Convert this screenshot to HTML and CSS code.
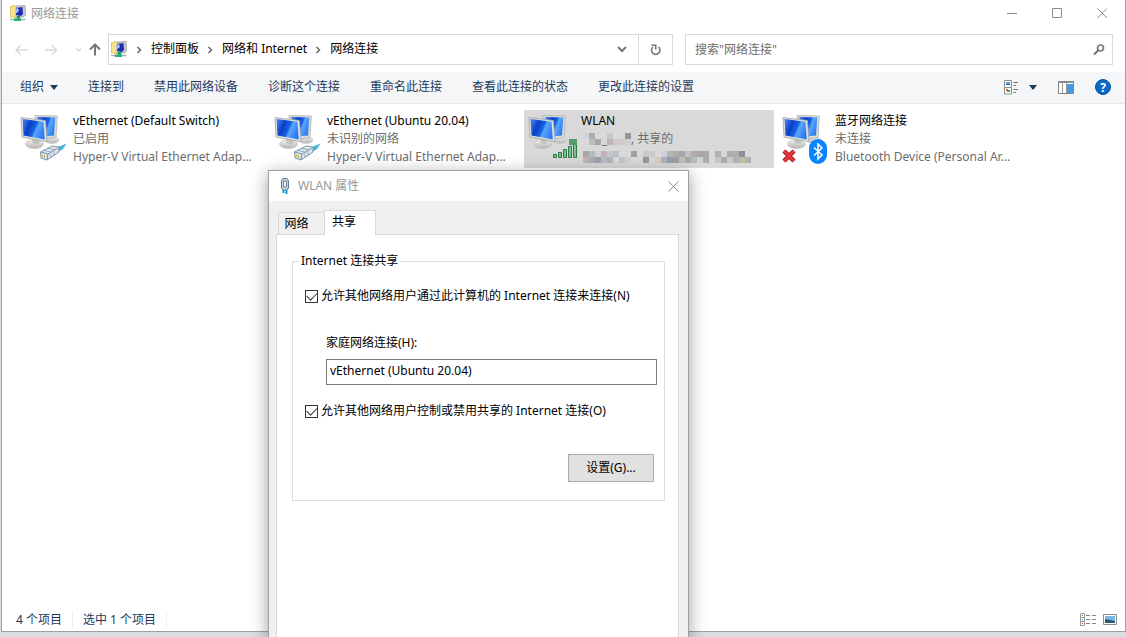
FILE: index.html
```html
<!DOCTYPE html>
<html lang="zh-CN">
<head>
    <meta charset="UTF-8">
    <title>网络连接</title>
    <link rel="stylesheet" href="styles.css">
</head>
<body>
    <!-- shared icons -->
    <svg class="defs" width="0" height="0" aria-hidden="true">
        <defs>
            <linearGradient id="screen" x1="0" y1="0.2" x2="1" y2="0.6">
                <stop offset="0" stop-color="#3f7ff0"/>
                <stop offset="0.3" stop-color="#0b3fc4"/>
                <stop offset="0.55" stop-color="#1462e6"/>
                <stop offset="0.65" stop-color="#5aa6fb"/>
                <stop offset="1" stop-color="#2a7af5"/>
            </linearGradient>
            <linearGradient id="stand" x1="0" y1="0" x2="0" y2="1">
                <stop offset="0" stop-color="#f2f2f0"/>
                <stop offset="1" stop-color="#b4b4b2"/>
            </linearGradient>
            <symbol id="pcs" viewBox="0 0 48 50">
                <ellipse cx="32" cy="28" rx="7" ry="3.5" fill="url(#stand)" stroke="#c8c8c5" stroke-width="0.5"/>
                <path d="M15 3.500 37.300 4 36 25.500 25 27 16 20Z" fill="#dcdcd8" stroke="#b0b0ad" stroke-width="0.8"/>
                <path d="M17 5 35.300 5.500 34 23.500 24 24.500Z" fill="url(#screen)"/>
                <ellipse cx="14.500" cy="32" rx="9" ry="4.500" fill="url(#stand)" stroke="#bdbdba" stroke-width="0.6"/>
                <path d="M12 26 20 28 18.500 32 13 31.500Z" fill="#c2c2be"/>
                <path d="M1 5.500 25.500 8.500 27 29.700 2 25Z" fill="#e2e2de" stroke="#a2a3a0" stroke-width="0.8"/>
                <path d="M2.600 7 23.500 9.800 24.800 27.500 3.500 23.500Z" fill="url(#screen)"/>
            </symbol>
            <symbol id="plug" viewBox="0 0 28 18">
                <path d="M17 5 27.500 0.500 24 6 20 8.500Z" fill="#3db4d8"/>
                <path d="M1.500 9 13 3 20.500 4 19.500 9.500 8 17 2 15Z" fill="#dbe6ee" stroke="#7389a0" stroke-width="0.9"/>
                <path d="M1.500 9 9 11 20 4.500M9 11 8 17" fill="none" stroke="#7389a0" stroke-width="0.9"/>
                <path d="M5 7.500 12 9M9 5.500 16 6.500M12 10.500V14M15 8.500V12" stroke="#8ba0b6" stroke-width="0.8"/>
                <path d="M3.500 11.500V14M5.500 12V15" stroke="#bfb45c" stroke-width="1"/>
            </symbol>
            <symbol id="netfolder" viewBox="0 0 17 17">
                <path d="M0.500 1.500 5 0.500 6.500 2V12.500L0.500 12Z" fill="#f7e488" stroke="#d8be56" stroke-width="0.8"/>
                <path d="M6.500 1 15 0.500 15.500 10 13 12H6Z" fill="#c9cacf" stroke="#9c9ca5" stroke-width="0.8"/>
                <path d="M6 3 12.500 2 13 9 11 11 6 10Z" fill="#1c2cb5"/>
                <path d="M5 4 8 3 9 6 5.500 9Z" fill="#a9bcf0"/>
                <path d="M7 11H10V14H7Z" fill="#179760"/>
                <path d="M0 14.500H15.500" stroke="#a9b2ae" stroke-width="1.500"/>
                <path d="M4 13.500H11V16H4Z" fill="#1bb475"/>
            </symbol>
            <symbol id="chevron" viewBox="0 0 6 8">
                <path d="M1.500 1 4.500 4 1.500 7" fill="none" stroke="#686868" stroke-width="1.500"/>
            </symbol>
        </defs>
    </svg>

    <main class="window">
        <header class="titlebar">
            <svg class="icon-app" width="17" height="17"><use href="#netfolder"/></svg>
            <h1 class="title">网络连接</h1>
            <div class="caption">
                <button class="caption-btn" aria-label="最小化"><svg width="11" height="11"><path d="M0 5.500H10" stroke="#8d8d8d"/></svg></button>
                <button class="caption-btn" aria-label="最大化"><svg width="11" height="11"><path d="M0.500 0.500H9.500V9.500H0.500Z" fill="none" stroke="#8d8d8d"/></svg></button>
                <button class="caption-btn" aria-label="关闭"><svg width="11" height="11"><path d="M0.500 0.500 10 10M10 0.500 0.500 10" stroke="#8d8d8d"/></svg></button>
            </div>
        </header>

        <div class="navbar">
            <div class="nav-buttons">
                <button class="nav-btn" aria-label="后退"><svg width="13" height="12"><path d="M12.500 6H1M6 1 1 6 6 11" fill="none" stroke="#d9d9d9" stroke-width="1.500"/></svg></button>
                <button class="nav-btn" aria-label="前进"><svg width="13" height="12"><path d="M0 6H11.500M6.500 1 11.500 6 6.500 11" fill="none" stroke="#d9d9d9" stroke-width="1.500"/></svg></button>
                <button class="nav-btn nav-small" aria-label="最近"><svg width="7" height="6"><path d="M1 1.500 3.500 4 6 1.500" fill="none" stroke="#d9d9d9" stroke-width="1.500"/></svg></button>
                <button class="nav-btn nav-up" aria-label="向上"><svg width="12" height="13"><path d="M6 12.500V2M1 6.500 6 1.500 11 6.500" fill="none" stroke="#777" stroke-width="2"/></svg></button>
            </div>
            <nav class="address">
                <svg class="icon-path" width="17" height="17"><use href="#netfolder"/></svg>
                <svg class="sep" width="6" height="8"><use href="#chevron"/></svg>
                <a class="crumb" href="#">控制面板</a>
                <svg class="sep" width="6" height="8"><use href="#chevron"/></svg>
                <a class="crumb" href="#">网络和 Internet</a>
                <svg class="sep" width="6" height="8"><use href="#chevron"/></svg>
                <a class="crumb" href="#">网络连接</a>
                <button class="drop" aria-label="历史记录"><svg width="10" height="7"><path d="M1 1 5 5 9 1" fill="none" stroke="#777" stroke-width="2"/></svg></button>
                <button class="refresh" aria-label="刷新"><svg width="12" height="12"><path d="M3 3A4.200 4.200 0 1 0 8.500 3" fill="none" stroke="#777" stroke-width="1.600"/><path d="M1.500 1.200H5.700V5.400" fill="none" stroke="#777" stroke-width="1.600"/></svg></button>
            </nav>
            <div class="search">
                <input class="search-input" type="text" aria-label="搜索" placeholder='搜索"网络连接"'>
                <svg width="12" height="12"><circle cx="7.500" cy="4" r="3" fill="none" stroke="#777" stroke-width="1.700"/><path d="M5.300 6.300 1 10.500" stroke="#777" stroke-width="2"/></svg>
            </div>
        </div>

        <div class="toolbar">
            <button class="tool">组织 <svg class="caret" width="8" height="5"><path d="M0 0H8L4 5Z" fill="#1e395b"/></svg></button>
            <button class="tool">连接到</button>
            <button class="tool">禁用此网络设备</button>
            <button class="tool">诊断这个连接</button>
            <button class="tool">重命名此连接</button>
            <button class="tool">查看此连接的状态</button>
            <button class="tool">更改此连接的设置</button>
            <div class="tool-icons">
                <button class="tool-icon" aria-label="更改视图">
                    <svg width="15" height="15"><path d="M0.500 0.500H7.500V14H0.500ZM0.500 7.500H7.500" fill="#fff" stroke="#8f8f8f"/><path d="M2 2H6V5H2Z" fill="#6aa6dc"/><path d="M2 4H6V5H2Z" fill="#24608f"/><path d="M2 9H4V11H2Z" fill="#d2773c"/><path d="M3 10H6V12H3Z" fill="#4aa347"/><path d="M9.500 2.500H14M9.500 5.500H12M9.500 9.500H14M9.500 12.500H12" stroke="#777"/></svg>
                    <svg width="8" height="5"><path d="M0 0H8L4 5Z" fill="#1e395b"/></svg>
                </button>
                <button class="tool-icon" aria-label="预览窗格"><svg width="16" height="13"><path d="M0.500 0.500H15.500V12.500H0.500Z" fill="#fff" stroke="#838383"/><path d="M1 1H15V2H1Z" fill="#8d9296"/><path d="M9 3H15V12H9Z" fill="#3f9be5"/><path d="M4.500 2V12M8.500 2V12" stroke="#999"/></svg></button>
                <button class="tool-icon" aria-label="帮助"><svg width="16" height="16"><circle cx="8" cy="8" r="7.500" fill="#0b69c7" stroke="#07539f"/><text class="help-mark" x="8" y="12.500" text-anchor="middle">?</text></svg></button>
            </div>
        </div>

        <section class="connections">
            <article class="tile">
                <div class="tile-icon"><svg width="48" height="50"><use href="#pcs"/></svg><svg class="badge-plug" width="28" height="18"><use href="#plug"/></svg></div>
                <div class="tile-text">
                    <h2 class="name">vEthernet (Default Switch)</h2>
                    <p>已启用</p>
                    <p>Hyper-V Virtual Ethernet Adap...</p>
                </div>
            </article>
            <article class="tile">
                <div class="tile-icon"><svg width="48" height="50"><use href="#pcs"/></svg><svg class="badge-plug" width="28" height="18"><use href="#plug"/></svg></div>
                <div class="tile-text">
                    <h2 class="name">vEthernet (Ubuntu 20.04)</h2>
                    <p>未识别的网络</p>
                    <p>Hyper-V Virtual Ethernet Adap...</p>
                </div>
            </article>
            <article class="tile selected">
                <div class="tile-icon"><svg width="48" height="50"><use href="#pcs"/></svg>
                    <svg class="badge-signal" width="25" height="20"><path d="M0.500 15.500H3.500V18.500H0.500ZM5.500 13.500H8.500V18.500H5.500ZM10.500 10.500H13.500V18.500H10.500ZM15.500 7.500H18.500V18.500H15.500ZM20.500 5.500H23.500V18.500H20.500Z" fill="#7cc091" stroke="#2b7d46"/><path d="M16 0H24V6H16Z" fill="#549c6a"/></svg>
                </div>
                <div class="tile-text">
                    <h2 class="name">WLAN</h2>
                    <!-- pixelated network name -->
                    <p class="masked">
                        <svg width="50" height="18" shape-rendering="crispEdges">
                            <rect x="2" y="3" width="6" height="6" fill="#cfd5da"/>
                            <rect x="8" y="3" width="6" height="6" fill="#adadad"/>
                            <rect x="26" y="3" width="6" height="6" fill="#c5cbca"/>
                            <rect x="44" y="3" width="6" height="6" fill="#8f98a0"/>
                            <rect x="8" y="9" width="6" height="6" fill="#bdbcb8"/>
                            <rect x="14" y="9" width="6" height="6" fill="#a5a7ac"/>
                            <rect x="21" y="15" width="5" height="1" fill="#6d6d6d"/>
                            <rect x="26" y="9" width="6" height="6" fill="#c4b3b6"/>
                            <rect x="32" y="9" width="6" height="6" fill="#cbcbcb"/>
                            <rect x="38" y="9" width="6" height="6" fill="#d3cbc5"/>
                            <rect x="44" y="9" width="6" height="6" fill="#cdd0d4"/>
                        </svg>, 共享的</p>
                    <!-- pixelated adapter name -->
                    <p class="masked">
                        <svg width="172" height="18" shape-rendering="crispEdges">
                            <rect x="2" y="3" width="6" height="6" fill="#a8a5a5"/>
                            <rect x="8" y="3" width="6" height="6" fill="#b6bac1"/>
                            <rect x="14" y="3" width="6" height="6" fill="#d0d1d5"/>
                            <rect x="20" y="3" width="6" height="6" fill="#c4b3b6"/>
                            <rect x="26" y="3" width="6" height="6" fill="#c8c8c8"/>
                            <rect x="32" y="3" width="6" height="6" fill="#b7c3cd"/>
                            <rect x="50" y="3" width="6" height="6" fill="#a89f98"/>
                            <rect x="62" y="3" width="6" height="6" fill="#c8cac9"/>
                            <rect x="68" y="3" width="6" height="6" fill="#cccccc"/>
                            <rect x="80" y="3" width="6" height="6" fill="#cdd2d8"/>
                            <rect x="86" y="3" width="6" height="6" fill="#b2b5ba"/>
                            <rect x="92" y="3" width="6" height="6" fill="#b2aca5"/>
                            <rect x="98" y="3" width="6" height="6" fill="#a7a7aa"/>
                            <rect x="104" y="3" width="6" height="6" fill="#bfc2c4"/>
                            <rect x="110" y="3" width="6" height="6" fill="#b0adab"/>
                            <rect x="116" y="3" width="6" height="6" fill="#aca6a6"/>
                            <rect x="122" y="3" width="6" height="6" fill="#aaaaaa"/>
                            <rect x="134" y="3" width="6" height="6" fill="#aeb2b6"/>
                            <rect x="140" y="3" width="6" height="6" fill="#d4d7d4"/>
                            <rect x="146" y="3" width="12" height="6" fill="#adadb0"/>
                            <rect x="158" y="3" width="6" height="6" fill="#8e8d94"/>
                            <rect x="2" y="9" width="6" height="6" fill="#c2b3b0"/>
                            <rect x="8" y="9" width="6" height="6" fill="#adadb0"/>
                            <rect x="14" y="9" width="6" height="6" fill="#9ba1aa"/>
                            <rect x="20" y="9" width="6" height="6" fill="#b8bbc0"/>
                            <rect x="26" y="9" width="6" height="6" fill="#b5b5b5"/>
                            <rect x="38" y="9" width="6" height="6" fill="#c4c4c6"/>
                            <rect x="44" y="9" width="6" height="6" fill="#cfd2d5"/>
                            <rect x="62" y="9" width="6" height="6" fill="#999999"/>
                            <rect x="74" y="9" width="6" height="6" fill="#d8cdbd"/>
                            <rect x="80" y="9" width="6" height="6" fill="#a9b2be"/>
                            <rect x="86" y="9" width="12" height="6" fill="#9aa0a6"/>
                            <rect x="98" y="9" width="6" height="6" fill="#c0c0c0"/>
                            <rect x="104" y="9" width="6" height="6" fill="#b0aaa6"/>
                            <rect x="110" y="9" width="6" height="6" fill="#b4bcc5"/>
                            <rect x="116" y="9" width="6" height="6" fill="#cfd2d3"/>
                            <rect x="122" y="9" width="6" height="6" fill="#adadad"/>
                            <rect x="134" y="9" width="6" height="6" fill="#c4c6ca"/>
                            <rect x="140" y="9" width="6" height="6" fill="#aaaaab"/>
                            <rect x="146" y="9" width="6" height="6" fill="#c9c9cb"/>
                            <rect x="152" y="9" width="6" height="6" fill="#b0b0b0"/>
                            <rect x="158" y="9" width="6" height="6" fill="#c4bba9"/>
                            <rect x="164" y="9" width="6" height="6" fill="#aeb0b3"/>
                        </svg>
                    </p>
                </div>
            </article>
            <article class="tile">
                <div class="tile-icon"><svg width="48" height="50"><use href="#pcs"/></svg>
                    <svg class="badge-x" width="14" height="14"><path d="M2 2 12 12M12 2 2 12" stroke="#a50f14" stroke-width="4.500"/><path d="M2 2 12 12M12 2 2 12" stroke="#e5383b" stroke-width="2.500"/></svg>
                    <svg class="badge-bt" width="18" height="25"><rect width="18" height="25" rx="9" fill="#0a84ff"/><path d="M5 8.500 13 16 9 20V5L13 9 5 16.500" fill="none" stroke="#fff" stroke-width="1.500"/></svg>
                </div>
                <div class="tile-text">
                    <h2 class="name">蓝牙网络连接</h2>
                    <p>未连接</p>
                    <p>Bluetooth Device (Personal Ar...</p>
                </div>
            </article>
        </section>

        <footer class="statusbar">
            <span class="status">4 个项目</span>
            <span class="status">选中 1 个项目</span>
            <div class="views">
                <button class="view-btn" aria-label="详细信息"><svg width="16" height="13"><path d="M0.500 0.500H4.500V12.500H0.500ZM0.500 4.500H4.500M0.500 8.500H4.500" fill="#fff" stroke="#999"/><path d="M6 2.500H10M12 2.500H16M6 6.500H10M12 6.500H16M6 10.500H10M12 10.500H16" stroke="#888"/><path d="M2 2H3V3H2Z" fill="#38864b"/><path d="M2 6H3V7H2Z" fill="#187ad9"/><path d="M2 10H3V11H2Z" fill="#d72020"/></svg></button>
                <button class="view-btn" aria-label="大图标"><svg width="14" height="11"><path d="M0.500 0.500H13.500V10.500H0.500Z" fill="#fff" stroke="#8c8c8c"/><path d="M2 2H12V9H2Z" fill="#79b6ea"/><path d="M2 5 7 6 12 7V9H2Z" fill="#275a71"/></svg></button>
            </div>
        </footer>
    </main>

    <section class="dialog" role="dialog" aria-labelledby="dialogTitle">
        <header class="dialog-title">
            <svg width="10" height="17"><path d="M1.500 2.500 3 0.500H7L8.500 2.500V10L7 12H3L1.500 10Z" fill="#c5d2df" stroke="#65788d"/><path d="M3.500 3H6.500V9H3.500Z" fill="#eef3f7" stroke="#73869a"/><path d="M3.500 12V15M6.500 12V16" stroke="#139bd1" stroke-width="2"/></svg>
            <h2 class="title" id="dialogTitle">WLAN 属性</h2>
            <button class="dialog-close" aria-label="关闭"><svg width="11" height="11"><path d="M0.500 0.500 10.500 10.500M10.500 0.500 0.500 10.500" stroke="#888"/></svg></button>
        </header>
        <div class="tabs" role="tablist">
            <button class="tab" role="tab">网络</button>
            <button class="tab active" role="tab" aria-selected="true">共享</button>
        </div>
        <div class="tab-panel">
            <fieldset class="group">
                <legend>Internet 连接共享</legend>
                <label class="check"><input type="checkbox" checked>允许其他网络用户通过此计算机的 Internet 连接来连接(N)</label>
                <div class="home">
                    <label for="home">家庭网络连接(H):</label>
                    <input class="home-input" type="text" id="home" value="vEthernet (Ubuntu 20.04)">
                </div>
                <label class="check"><input type="checkbox" checked>允许其他网络用户控制或禁用共享的 Internet 连接(O)</label>
                <button class="settings">设置(G)...</button>
            </fieldset>
        </div>
    </section>
</body>
</html>
```
FILE: styles.css
```css
* {
    margin: 0;
    padding: 0;
    box-sizing: border-box;
}

body {
    font-family: "Noto Sans", "Noto Sans CJK SC", sans-serif;
    font-size: 12px;
    line-height: 18px;
    height: 100vh;
    padding: 0 0 5px 1px;
    background: #dcdde0;
    color: #000;
    overflow: hidden;
    position: relative;
}

button, input {
    font: inherit;
    color: inherit;
    background: none;
    border: none;
    border-radius: 0;
    outline: none;
}

h1, h2 {
    font-size: 12px;
    font-weight: 400;
}

svg {
    display: block;
    flex: none;
}

.defs {
    position: absolute;
}

.window {
    display: flex;
    flex-direction: column;
    height: 100%;
    background: #fff;
    border: 1px solid #a0a0a0;
    border-top: none;
}

/* Title bar */
.titlebar {
    display: flex;
    align-items: center;
    height: 27px;
    padding-left: 8px;
    gap: 4px;
}

.title {
    flex: 1;
    color: #999;
}

.caption {
    display: flex;
}

.caption-btn {
    display: flex;
    align-items: center;
    justify-content: center;
    width: 45px;
    height: 27px;
}

/* Address row */
.navbar {
    display: flex;
    align-items: center;
    height: 45px;
    padding: 0 12px 0 13px;
}

.nav-buttons {
    display: flex;
    align-items: center;
    width: 93px;
}

.nav-btn {
    width: 30px;
}

.nav-small {
    width: 14px;
}

.nav-up {
    width: 14px;
}

.address {
    display: flex;
    align-items: center;
    flex: 561;
    height: 31px;
    padding-left: 2px;
    border: 1px solid #d9d9d9;
}

.sep {
    margin: 0 9px 0 8px;
}

.crumb {
    padding-bottom: 1px;
    color: #000;
    text-decoration: none;
}

.drop {
    display: flex;
    justify-content: center;
    width: 32px;
    margin-left: auto;
}

.refresh {
    display: flex;
    align-items: center;
    justify-content: center;
    width: 34px;
    height: 29px;
    border-left: 1px solid #d9d9d9;
}

.search {
    display: flex;
    align-items: center;
    flex: 410;
    height: 31px;
    margin-left: 12px;
    padding: 0 7px 0 9px;
    border: 1px solid #d9d9d9;
}

.search-input {
    flex: 1;
    min-width: 0;
}

.search-input::placeholder {
    color: #6d6d6d;
    opacity: 1;
}

/* Command bar */
.toolbar {
    display: flex;
    align-items: center;
    height: 32px;
    padding: 0 14px 1px 18px;
    gap: 30px;
    background: #f5f6f7;
    border-bottom: 1px solid #e8e8e9;
    color: #1e395b;
}

.tool {
    display: flex;
    align-items: center;
    gap: 6px;
    white-space: nowrap;
}

.tool-icons {
    display: flex;
    align-items: center;
    gap: 21px;
    margin-left: auto;
}

.tool-icon {
    display: flex;
    align-items: center;
    gap: 10px;
}

.help-mark {
    font-size: 12px;
    font-weight: 700;
    fill: #fff;
}

/* Connection tiles */
.connections {
    display: flex;
    flex: 1;
    align-items: flex-start;
    gap: 4px;
    padding: 6px 14px;
}

.tile {
    display: flex;
    width: 250px;
    height: 58px;
    padding: 2px 4px;
    gap: 5px;
}

.tile.selected {
    background: #d9d9d9;
}

.tile-icon {
    position: relative;
    width: 48px;
    height: 50px;
}

.badge-plug {
    position: absolute;
    left: 19px;
    top: 31px;
}

.badge-signal {
    position: absolute;
    left: 25px;
    top: 27px;
}

.badge-x {
    position: absolute;
    left: 0;
    top: 37px;
}

.badge-bt {
    position: absolute;
    left: 27px;
    top: 27px;
}

.tile-text {
    color: #6d6d6d;
    white-space: nowrap;
}

.name {
    color: #000;
}

.masked {
    display: flex;
    align-items: center;
}

/* Status bar */
.statusbar {
    display: flex;
    align-items: center;
    height: 23px;
    padding: 0 8px 0 14px;
    color: #1e395b;
}

.status {
    padding-right: 10px;
    margin-right: 10px;
    border-right: 1px solid #f0f0f0;
}

.views {
    display: flex;
    align-items: center;
    gap: 7px;
    margin-left: auto;
}

/* WLAN properties */
.dialog {
    position: absolute;
    left: 268px;
    top: 170px;
    bottom: 0;
    display: flex;
    flex-direction: column;
    width: 421px;
    background: #f0f0f0;
    border: 1px solid #a0a0a0;
    border-bottom: none;
    box-shadow: 0 4px 16px rgba(0, 0, 0, 0.4);
}

.dialog-title {
    display: flex;
    align-items: center;
    height: 30px;
    padding: 0 9px 0 11px;
    gap: 8px;
    background: #fff;
}

.tabs {
    display: flex;
    align-items: flex-end;
    height: 33px;
    padding-left: 9px;
}

.tab {
    width: 46px;
    height: 22px;
    padding-right: 10px;
    border: 1px solid #d9d9d9;
    border-width: 1px 0 0 1px;
}

.tab.active {
    position: relative;
    z-index: 1;
    width: 52px;
    height: 25px;
    margin-bottom: -1px;
    padding: 0 12px 2px 0;
    background: #fff;
    border-right-width: 1px;
}

.tab-panel {
    flex: 1;
    margin: 0 9px 0 7px;
    padding: 17px 13px 0 15px;
    background: #fff;
    border: 1px solid #d9d9d9;
    border-bottom: none;
}

.group {
    display: flex;
    flex-direction: column;
    height: 249px;
    padding: 17px 10px 18px 12px;
    border: 1px solid #dcdcdc;
}

.group legend {
    margin-left: -6px;
    padding: 0 2px;
}

.check {
    display: flex;
    align-items: center;
    gap: 3px;
    white-space: nowrap;
}

.check input {
    appearance: none;
    width: 13px;
    height: 13px;
    border: 1px solid #333;
    position: relative;
}

.check input:checked::after {
    content: '';
    position: absolute;
    left: 3px;
    top: -1px;
    width: 5px;
    height: 9px;
    border: solid #333;
    border-width: 0 1px 1px 0;
    transform: rotate(45deg);
}

.home {
    display: flex;
    flex-direction: column;
    gap: 7px;
    margin: 29px -3px 17px 21px;
}

.home-input {
    width: 100%;
    height: 26px;
    padding: 0 3px 3px;
    border: 1px solid #7a7a7a;
}

.settings {
    align-self: flex-end;
    width: 86px;
    height: 28px;
    margin-top: auto;
    background: #e1e1e1;
    border: 1px solid #adadad;
}
```
